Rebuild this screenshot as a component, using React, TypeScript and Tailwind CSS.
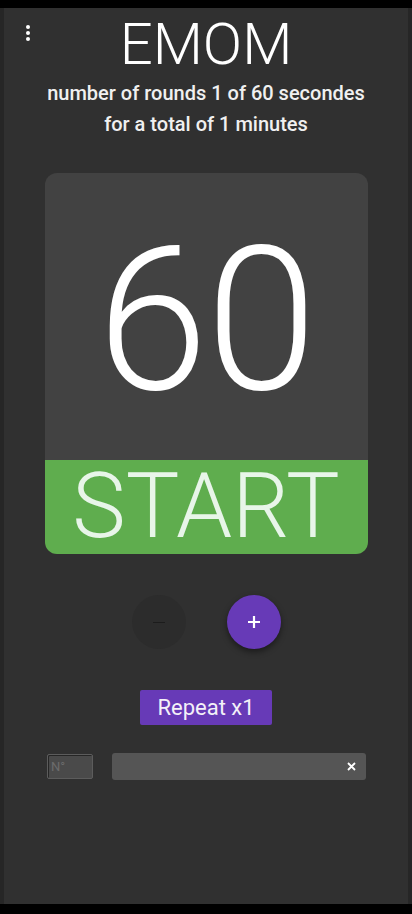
import React, { useState } from 'react';

const App: React.FC = () => {
  const [reps, setReps] = useState(1);
  const [name, setName] = useState('');

  return (
    <div className="w-[412px] h-[914px] bg-black pt-[8px] pb-[10px] font-['Roboto',sans-serif] overflow-hidden">
      <div className="relative h-full bg-[#303030] border-x-[4px] border-[#262626] flex flex-col items-center">
        {/* menu dots */}
        <button className="absolute left-[19px] top-[15px] w-[10px] h-[20px] flex flex-col items-center justify-center gap-[2px]">
          <span className="w-[4px] h-[4px] rounded-full bg-white" />
          <span className="w-[4px] h-[4px] rounded-full bg-white" />
          <span className="w-[4px] h-[4px] rounded-full bg-white" />
        </button>

        <h1 className="mt-[2px] text-[58px] leading-[68px] font-light text-white">EMOM</h1>
        <p className="text-[20px] leading-[31px] font-medium text-[#f0f0f0] text-center">
          number of rounds {reps} of 60 secondes
          <br />
          for a total of {reps} minutes
        </p>

        <div className="mt-[33px] w-[323px] flex flex-col">
          <div className="h-[287px] bg-[#424242] rounded-t-[12px] flex items-center justify-center">
            <span className="text-[200px] leading-none font-light text-white tracking-[-2px] mt-[8px]">60</span>
          </div>
          <div className="h-[94px] bg-[#5fad4e] rounded-b-[12px] flex items-center justify-center cursor-pointer">
            <span className="text-[90px] leading-none font-light text-[#e8f5e9] whitespace-nowrap">START</span>
          </div>
        </div>

        <div className="mt-[41px] flex items-center gap-[41px]">
          <button className="w-[54px] h-[54px] rounded-full bg-[#2c2c2c] flex items-center justify-center" onClick={() => setReps(Math.max(1, reps - 1))}>
            <span className="w-[12px] h-[1px] bg-[#1c1c1c]" />
          </button>
          <button className="w-[54px] h-[54px] rounded-full bg-[#673ab7] shadow-[0_3px_6px_rgba(0,0,0,0.45)] flex items-center justify-center" onClick={() => setReps(reps + 1)}>
            <svg width="16" height="16" viewBox="0 0 16 16">
              <path d="M8 2v12M2 8h12" stroke="white" strokeWidth="2.2" />
            </svg>
          </button>
        </div>

        <div className="mt-[41px] h-[35px] px-[17px] bg-[#673ab7] rounded-[2px] flex items-center">
          <span className="text-[22px] text-[#f3f0f8]">Repeat x{reps}</span>
        </div>

        <div className="mt-[28px] w-full flex items-center pl-[43px] pr-[42px] gap-[19px]">
          <input
            placeholder="N°"
            className="w-[46px] h-[25px] bg-[#4a4a4a] border border-[#5c5c5c] shadow-[inset_1px_1px_0_#262626] rounded-[2px] px-[3px] text-[13px] text-white placeholder:text-[#6c6c6c] outline-none"
          />
          <div className="flex-1 h-[27px] bg-[#555555] rounded-[3px] flex items-center pr-[10px]">
            <input
              value={name}
              onChange={(e) => setName(e.target.value)}
              className="flex-1 min-w-0 bg-transparent px-2 text-white text-[14px] outline-none"
            />
            <svg width="9" height="9" viewBox="0 0 9 9">
              <path d="M1 1l7 7M8 1l-7 7" stroke="white" strokeWidth="1.8" />
            </svg>
          </div>
        </div>
      </div>
    </div>
  );
};

export default App;
